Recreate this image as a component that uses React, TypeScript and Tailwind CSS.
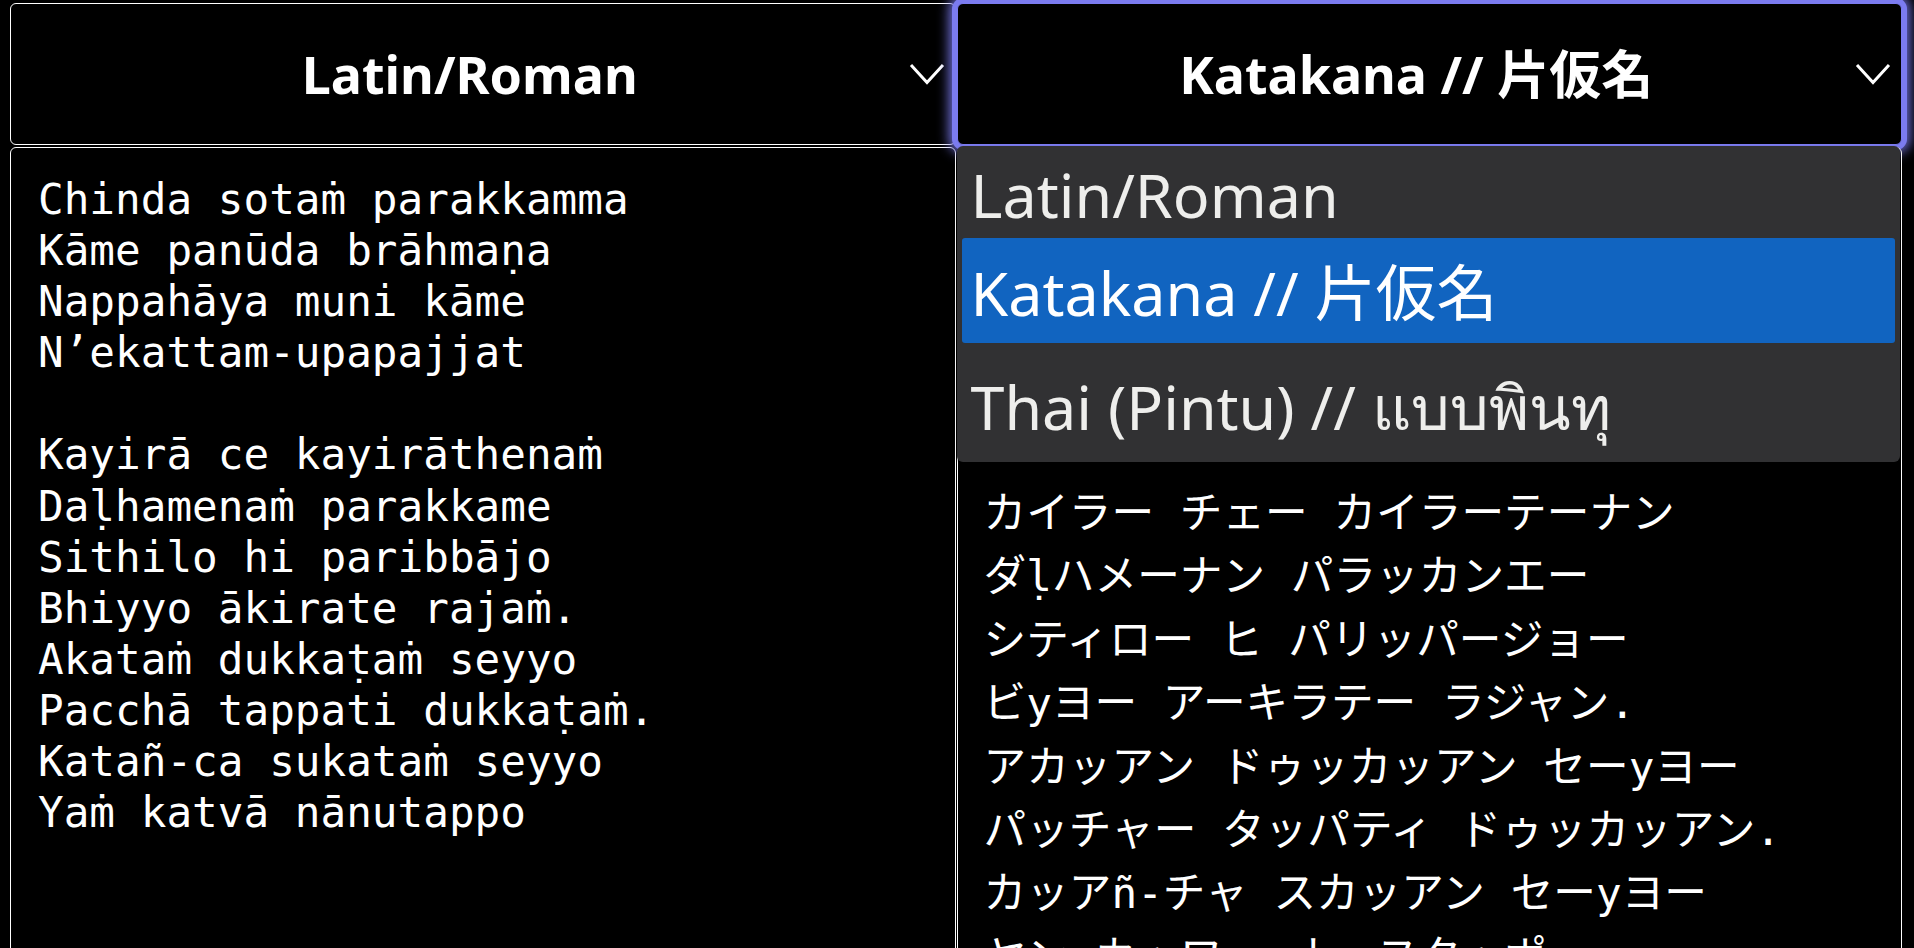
import React from "react";

const latin = [
  "Chinda sotaṁ parakkamma",
  "Kāme panūda brāhmaṇa",
  "Nappahāya muni kāme",
  "N’ekattam-upapajjat",
  "",
  "Kayirā ce kayirāthenaṁ",
  "Daḷhamenaṁ parakkame",
  "Sithilo hi paribbājo",
  "Bhiyyo ākirate rajaṁ.",
  "Akataṁ dukkaṭaṁ seyyo",
  "Pacchā tappati dukkaṭaṁ.",
  "Katañ-ca sukataṁ seyyo",
  "Yaṁ katvā nānutappo",
];

const katakana = [
  "チンダ ソッアン パラッカンマ",
  "カーメー パヌーダ ブラーフマナ",
  "ナッパハーヤ ムニ カーメー",
  "ネーカッアム-ウパパッジャッ",
  "",
  "カイラー チェー カイラーテーナン",
  "ダḷハメーナン パラッカンエー",
  "シティロー ヒ パリッパージョー",
  "ビyヨー アーキラテー ラジャン.",
  "アカッアン ドゥッカッアン セーyヨー",
  "パッチャー タッパティ ドゥッカッアン.",
  "カッアñ-チャ スカッアン セーyヨー",
  "ヤン カッワー ナーヌタッポー",
];

function Chevron() {
  return (
    <svg width="36" height="22" viewBox="0 0 36 22" className="shrink-0">
      <polyline points="2,2 18,19.5 34,2" fill="none" stroke="white" strokeWidth="3" />
    </svg>
  );
}

function Select({ label, focused }: { label: string; focused?: boolean }) {
  return (
    <div
      className={
        focused
          ? "flex h-[142px] items-center rounded-[6px] border border-[#7b7bf0] bg-black pl-[20px] pr-[10px] shadow-[0_0_0_5px_#7b7bf0,0_0_12px_8px_rgba(123,123,240,0.9)]"
          : "flex h-[142px] items-center rounded-[6px] border border-white bg-black pl-[20px] pr-[10px]"
      }
    >
      <span className="flex-1 text-center font-['Noto_Sans','Noto_Sans_CJK_JP',sans-serif] text-[52px] font-bold text-white">
        {label}
      </span>
      <Chevron />
    </div>
  );
}

function Script({ lines, cjk }: { lines: string[]; cjk?: boolean }) {
  return (
    <div
      className={
        cjk
          ? "mt-[2px] h-[900px] rounded-[6px] border border-white px-[26px] pt-[17px] font-['DejaVu_Sans_Mono','Noto_Sans_CJK_JP',monospace] text-[42.67px] leading-[63.4px] whitespace-pre text-white"
          : "mt-[2px] h-[900px] rounded-[6px] border border-white px-[27px] pt-[26px] font-['DejaVu_Sans_Mono',monospace] text-[42.67px] leading-[51.1px] whitespace-pre text-white"
      }
    >
      {lines.map((l, i) => (
        <div key={i}>{l === "" ? "\u00a0" : l}</div>
      ))}
    </div>
  );
}

export default function App() {
  return (
    <div className="h-[948px] overflow-hidden bg-black pl-[10px] pr-[12px] pt-[3px]">
      <div className="grid grid-cols-2 gap-x-[1px]">
        <div>
          <Select label="Latin/Roman" />
          <Script lines={latin} />
        </div>
        <div className="relative">
          <Select label="Katakana // 片仮名" focused />
          <Script lines={katakana} cjk />
          {/* native popup list of the focused select */}
          <div className="absolute left-0 right-[2px] top-[143px] rounded-[6px] bg-[#313133] px-[5px] pb-[4px] pt-[2px] font-['Noto_Sans','Noto_Sans_CJK_JP',sans-serif] text-[61px] font-normal text-[#eeeeec] shadow-[0_1px_2px_rgba(0,0,0,0.6)]">
            <div className="flex h-[90px] items-center rounded-[3px] pl-[9px] pt-[4px]">Latin/Roman</div>
            <div className="flex h-[105px] items-center rounded-[3px] bg-[#1164c0] pl-[9px] pt-[4px] text-white">
              Katakana // 片仮名
            </div>
            <div className="flex h-[115px] items-center rounded-[3px] pl-[9px] pt-[12px]">
              Thai (Pintu) // แบบพินทุ
            </div>
          </div>
        </div>
      </div>
    </div>
  );
}
